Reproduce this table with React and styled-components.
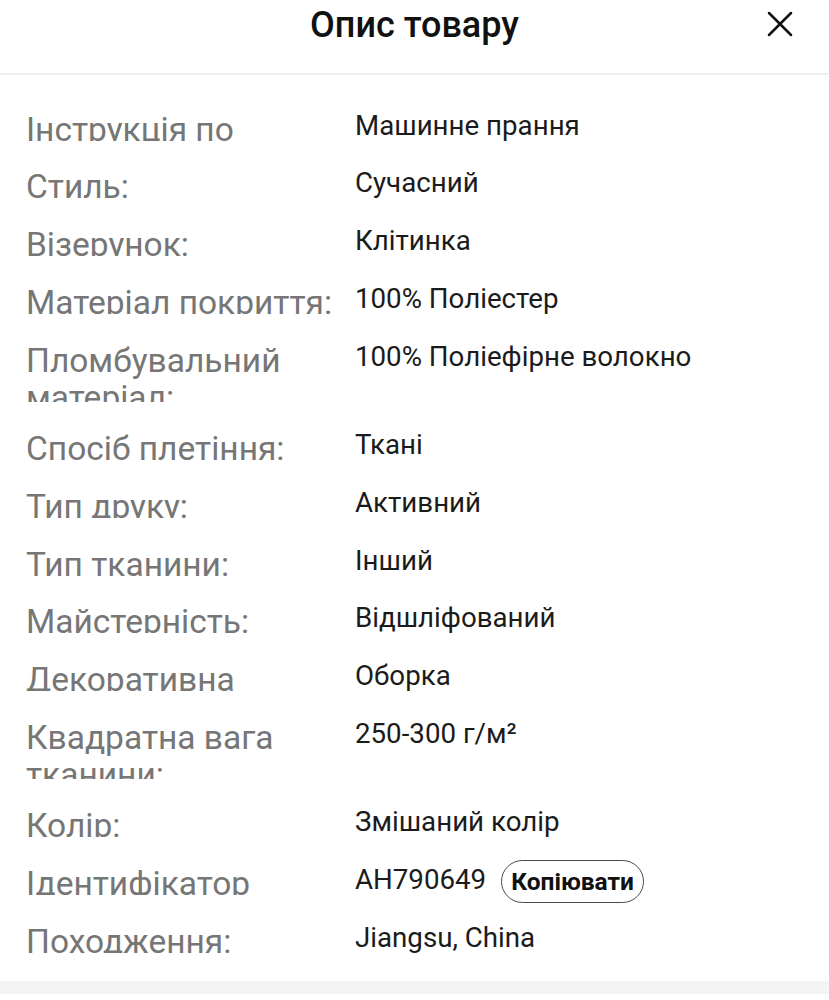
import styled, { createGlobalStyle } from "styled-components";

const GlobalStyle = createGlobalStyle`
  body {
    margin: 0;
    background: #fff;
    font-family: Roboto, "Noto Sans", "Liberation Sans", sans-serif;
  }
`;

const Sheet = styled.div`
  width: 829px;
  min-height: 1000px;
  background: #fff;
  display: flex;
  flex-direction: column;
`;

const Header = styled.header`
  height: 75px;
  padding-top: 5px;
  box-sizing: border-box;
  border-bottom: 2px solid #eeeeee;
  display: grid;
  grid-template-columns: 1fr auto 1fr;
  grid-template-rows: 40px;
  align-items: center;
`;

const Title = styled.h2`
  grid-column: 2;
  margin: 0;
  font-size: 36px;
  line-height: 40px;
  font-weight: 500;
  color: #111;
`;

const CloseButton = styled.button`
  grid-column: 3;
  justify-self: end;
  margin: 0 31px 2px 0;
  width: 36px;
  height: 36px;
  padding: 0;
  border: none;
  background: transparent;
  display: flex;
  align-items: center;
  justify-content: center;
  cursor: pointer;
`;

const List = styled.div`
  padding: 35.5px 0 0;
  display: flex;
  flex-direction: column;
`;

const Row = styled.div`
  display: grid;
  grid-template-columns: 329px 1fr;
  align-items: start;
  padding-left: 26px;
  margin-bottom: 27.8px;
`;

/* labels are cut off just at the baseline, like on the phone */
const Label = styled.div`
  font-size: 33.5px;
  line-height: 37px;
  color: #767676;
  height: ${(p) => (p.$lines === 2 ? "60.5px" : "30px")};
  overflow: hidden;
  white-space: ${(p) => (p.$lines === 2 ? "normal" : "nowrap")};
`;

const Value = styled.div`
  padding-top: 2px;
  font-size: 27.7px;
  line-height: 26px;
  color: #1b1b1b;
`;

const CopyButton = styled.button`
  display: inline-block;
  vertical-align: middle;
  margin: -9px 0 -9px 15px;
  height: 43px;
  padding: 0 9px;
  border: 1px solid #4a4a4a;
  border-radius: 22px;
  background: #fff;
  font-family: inherit;
  font-size: 24.5px;
  font-weight: 700;
  color: #111;
`;

const Footer = styled.div`
  height: 13px;
  background: #f4f4f4;
`;

const rows = [
  { label: "Інструкція по", value: "Машинне прання" },
  { label: "Стиль:", value: "Сучасний" },
  { label: "Візерунок:", value: "Клітинка" },
  { label: "Матеріал покриття:", value: "100% Поліестер" },
  { label: "Пломбувальний матеріал:", value: "100% Поліефірне волокно", lines: 2 },
  { label: "Спосіб плетіння:", value: "Ткані" },
  { label: "Тип друку:", value: "Активний" },
  { label: "Тип тканини:", value: "Інший" },
  { label: "Майстерність:", value: "Відшліфований" },
  { label: "Декоративна", value: "Оборка" },
  { label: "Квадратна вага тканини:", value: "250-300 г/м²", lines: 2 },
  { label: "Колір:", value: "Змішаний колір" },
  { label: "Ідентифікатор", value: "AH790649", copy: true },
  { label: "Походження:", value: "Jiangsu, China" },
];

const CloseIcon = () => (
  <svg width="26" height="26" viewBox="0 0 26 26">
    <path
      d="M2 2 L24 24 M24 2 L2 24"
      stroke="#111"
      strokeWidth="2.5"
      strokeLinecap="round"
      fill="none"
    />
  </svg>
);

const App = () => {
  return (
    <Sheet>
      <GlobalStyle />
      <Header>
        <Title>Опис товару</Title>
        <CloseButton aria-label="Закрити">
          <CloseIcon />
        </CloseButton>
      </Header>
      <List>
        {rows.map((row) => (
          <Row key={row.label}>
            <Label $lines={row.lines}>{row.label}</Label>
            <Value>
              {row.value}
              {row.copy && <CopyButton>Копіювати</CopyButton>}
            </Value>
          </Row>
        ))}
      </List>
      <Footer />
    </Sheet>
  );
};

export default App;
